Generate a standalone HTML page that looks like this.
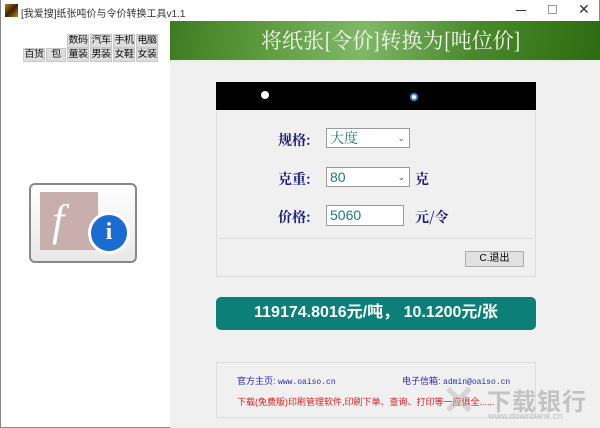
<!DOCTYPE html>
<html><head><meta charset="utf-8"><style>
*{margin:0;padding:0;box-sizing:border-box}
body{width:600px;height:428px;overflow:hidden;background:#fff;font-family:"Liberation Sans","Noto Sans CJK SC",sans-serif;position:relative}
.a{position:absolute}
.tb{font-size:10px;color:#333;white-space:nowrap}
.btn{position:absolute;background:#ddd;border:1px solid #c8c8c8;font-size:10px;text-align:center;line-height:12px;height:14px;color:#111;white-space:nowrap;overflow:hidden;letter-spacing:-0.5px}
.lbl{position:absolute;font-family:"Noto Serif CJK SC",serif;font-weight:bold;color:#1a1a80;font-size:14px;white-space:nowrap}
.sel{position:absolute;background:#fff;border:1px solid #999;height:20px;font-size:14px;color:#1a7a78;padding-left:3px;line-height:18px;font-family:"Liberation Sans","Noto Serif CJK SC",sans-serif}
</style></head><body>
<div class="a" style="left:0;top:0;width:600px;height:428px;border:1px solid #888;border-top:none"></div>
<div class="a" style="left:5px;top:4px;width:13px;height:13px;background:linear-gradient(135deg,#c8801a,#3a2200 50%,#d08020)"></div>
<div class="a tb" style="left:21px;top:5px">[我爱搜]纸张吨价与令价转换工具v1.1</div>
<div class="a" style="left:516px;top:10px;width:10px;height:1px;background:#333"></div>
<div class="a" style="left:548px;top:5px;width:9px;height:9px;border:1px solid #999"></div>
<div class="a" style="left:578px;top:1px;font-size:14px;color:#333">✕</div>
<div class="a" style="left:170px;top:21px;width:430px;height:407px;background:#f0f0f0"></div>
<div class="a" style="left:170px;top:21px;width:430px;height:40px;background:linear-gradient(100deg,#3e7a22 0%,#5a983c 20%,#80b868 45%,#4a8a2c 70%,#2e6a12 100%)"></div>
<div class="a" style="left:170px;top:25px;width:430px;text-align:center;font-size:21px;color:#f4f8ee;font-family:'Noto Serif CJK SC','Noto Sans CJK SC',serif;padding-left:12px;white-space:nowrap">将纸张[令价]转换为[吨位价]</div>
<div class="a" style="left:170px;top:60px;width:430px;height:2px;background:#e8f0e0"></div>
<div class="btn" style="left:67px;top:34px;width:22px">数码</div>
<div class="btn" style="left:90px;top:34px;width:22px">汽车</div>
<div class="btn" style="left:113px;top:34px;width:22px">手机</div>
<div class="btn" style="left:136px;top:34px;width:22px">电脑</div>
<div class="btn" style="left:23px;top:48px;width:22px">百货</div>
<div class="btn" style="left:46px;top:48px;width:20px">包</div>
<div class="btn" style="left:67px;top:48px;width:22px">童装</div>
<div class="btn" style="left:90px;top:48px;width:22px">男装</div>
<div class="btn" style="left:113px;top:48px;width:22px">女鞋</div>
<div class="btn" style="left:136px;top:48px;width:22px">女装</div>
<div class="a" style="left:29px;top:183px;width:108px;height:80px;border:2px solid #888;border-radius:6px;background:linear-gradient(#fff,#e8e8e8)"></div>
<div class="a" style="left:40px;top:192px;width:58px;height:58px;background:#c8aeac"></div>
<div class="a" style="left:52px;top:195px;font-size:44px;color:#fff;font-style:italic;font-family:'Liberation Serif',serif">f</div>
<div class="a" style="left:88px;top:212px;width:42px;height:42px;border-radius:50%;background:#1a6cd0;border:3px solid #fff;color:#fff;font-weight:bold;font-size:24px;text-align:center;line-height:34px;font-family:'Liberation Serif',serif">i</div>
<div class="a" style="left:216px;top:82px;width:320px;height:28px;background:#000"></div>
<div class="a" style="left:261px;top:91px;width:8px;height:8px;border-radius:50%;background:#fff"></div>
<div class="a" style="left:410px;top:93px;width:8px;height:8px;border-radius:50%;border:2px solid #3a8ee0;background:#fff"></div>
<div class="a" style="left:216px;top:110px;width:320px;height:167px;border:1px solid #ddd;border-top:none"></div>
<div class="a" style="left:218px;top:238px;width:316px;height:1px;background:#ddd"></div>
<div class="lbl" style="left:278px;top:130px">规格:</div>
<div class="sel" style="left:326px;top:128px;width:84px">大度<span style="position:absolute;right:4px;font-size:9px;color:#555">⌄</span></div>
<div class="lbl" style="left:278px;top:169px">克重:</div>
<div class="sel" style="left:326px;top:167px;width:84px">80<span style="position:absolute;right:4px;font-size:9px;color:#555">⌄</span></div>
<div class="lbl" style="left:415px;top:169px">克</div>
<div class="lbl" style="left:278px;top:207px">价格:</div>
<div class="sel" style="left:326px;top:205px;width:78px;height:21px">5060</div>
<div class="lbl" style="left:415px;top:207px">元/令</div>
<div class="a" style="left:465px;top:251px;width:59px;height:16px;background:#e1e1e1;border:1px solid #adadad;font-size:10px;text-align:center;line-height:14px">C.退出</div>
<div class="a" style="left:216px;top:297px;width:320px;height:33px;background:#0b7f78;border-radius:5px;color:#fff;font-weight:bold;font-size:16px;text-align:center;line-height:32px">119174.8016元/吨， 10.1200元/张</div>
<div class="a" style="left:216px;top:362px;width:320px;height:56px;border:1px solid #ddd"></div>
<div class="a" style="left:237px;top:374px;font-size:9px;color:#2a2ab0;white-space:nowrap">官方主页: <span style="font-family:'Liberation Mono',monospace;font-size:8px">www.oaiso.cn</span></div>
<div class="a" style="left:402px;top:374px;font-size:9px;color:#2a2ab0;white-space:nowrap">电子信箱: <span style="font-family:'Liberation Mono',monospace;font-size:8px">admin@oaiso.cn</span></div>
<div class="a" style="left:237px;top:395px;font-size:9px;color:#e02020;white-space:nowrap">下载(免费版)印刷管理软件,印刷下单、查询、打印等一应俱全......</div>
<div class="a" style="left:442px;top:378px;font-size:40px;color:rgba(170,170,170,.4);font-weight:bold">✕</div>
<div class="a" style="left:487px;top:382px;font-size:24px;color:rgba(140,140,140,.45);font-weight:bold;letter-spacing:1px;white-space:nowrap">下载银行</div>
<div class="a" style="left:488px;top:411px;font-size:9px;color:rgba(140,140,140,.5)">www.downbank.cn</div>
</body></html>
